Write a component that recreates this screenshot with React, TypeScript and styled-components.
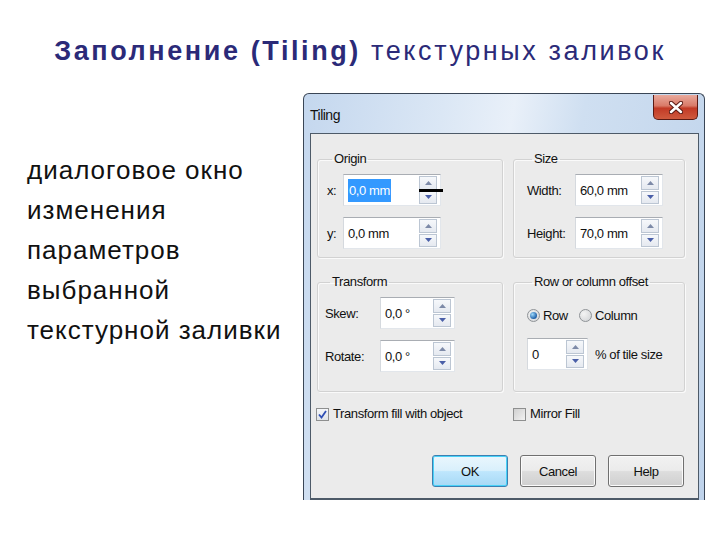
import styled, { createGlobalStyle, css } from "styled-components";

const GlobalStyle = createGlobalStyle`
  html, body {
    margin: 0;
    padding: 0;
    background: #fff;
  }
  body {
    font-family: "Liberation Sans", Arial, sans-serif;
  }
`;

const Slide = styled.div`
  width: 720px;
  height: 540px;
  overflow: hidden;
  background: #fff;
  display: flex;
  flex-direction: column;
`;

const Title = styled.h1`
  margin: 0;
  height: 93px;
  box-sizing: border-box;
  padding-top: 35px;
  text-align: center;
  font-size: 27px;
  line-height: 32px;
  font-weight: normal;
  letter-spacing: 2.6px;
  white-space: nowrap;
  color: #2b2a78;

  b {
    font-weight: bold;
  }
`;

const Body = styled.div`
  display: flex;
  align-items: flex-start;
`;

const Caption = styled.p`
  margin: 0;
  width: 303px;
  box-sizing: border-box;
  padding: 57px 0 0 27px;
  font-size: 26px;
  line-height: 40px;
  letter-spacing: 1px;
  white-space: nowrap;
  color: #111;
`;

/* ---------- dialog window ---------- */

const Window = styled.div`
  width: 402px;
  height: 407px;
  box-sizing: border-box;
  border: 1px solid #3a4656;
  border-bottom: none;
  border-radius: 6px 6px 0 0;
  padding: 0 5px 0 6px;
  display: flex;
  flex-direction: column;
  background: linear-gradient(
    100deg,
    #c4d7ee 0%,
    #dbe7f5 30%,
    #e9f0f9 45%,
    #cfdff1 60%,
    #bfd3eb 100%
  );
  font-family: "Liberation Sans", Arial, sans-serif;
  font-size: 13px;
  letter-spacing: -0.4px;
  color: #111;
`;

const TitleBar = styled.div`
  height: 39px;
  display: flex;
  align-items: flex-start;
  justify-content: space-between;
`;

const WindowTitle = styled.span`
  margin-top: 13px;
  font-size: 14px;
  letter-spacing: -0.5px;
  color: #111;
`;

const CloseButton = styled.div`
  width: 45px;
  height: 25px;
  margin: 1px 1px 0 0;
  box-sizing: border-box;
  border: 1px solid #5a1a14;
  border-top: none;
  border-radius: 0 0 5px 5px;
  background: linear-gradient(
    #e9a99c 0%,
    #d97a68 45%,
    #c23a26 55%,
    #cf5a3e 100%
  );
  display: flex;
  align-items: center;
  justify-content: center;
`;

const Client = styled.div`
  flex: 1;
  border: 1px solid #4d5a68;
  border-bottom-width: 2px;
  background: #ebebeb;
  padding: 18px 12px 0 6px;
  display: flex;
  flex-direction: column;
`;

const Groups = styled.div`
  display: grid;
  grid-template-columns: 186px 172px;
  grid-template-rows: 106px 117px;
  column-gap: 10px;
  row-gap: 17px;
`;

const Group = styled.fieldset<{ $pad: number }>`
  margin: 0;
  min-width: 0;
  border: 1px solid #d2d2d2;
  border-radius: 3px;
  box-shadow: inset 1px 1px 0 #fafafa, 1px 1px 0 #fafafa;
  padding: 8px 6px 8px ${(p) => p.$pad}px;
  display: flex;
  flex-direction: column;
  gap: 11px;
`;

const Legend = styled.legend`
  padding: 0 2px;
  margin-left: 5px;
  line-height: 14px;
`;

const Row = styled.div<{ $gap?: number; $mt?: number }>`
  display: flex;
  align-items: center;
  gap: ${(p) => p.$gap ?? 0}px;
  margin-top: ${(p) => p.$mt ?? 0}px;
`;

const Label = styled.span<{ $w: number }>`
  width: ${(p) => p.$w}px;
  flex: none;
`;

const SpinBox = styled.div<{ $w: number }>`
  position: relative;
  width: ${(p) => p.$w}px;
  height: 32px;
  box-sizing: border-box;
  flex: none;
  display: flex;
  align-items: center;
  background: #fff;
  border: 1px solid #e2e6eb;
  border-top-color: #a9adb3;
  border-left-color: #d5d9de;
`;

const Value = styled.span`
  flex: 1;
  padding-left: 4px;
`;

const Selected = styled.span`
  background: #3399ff;
  color: #fff;
  padding: 4px 1px;
`;

const SpinButtons = styled.div`
  width: 18px;
  height: 28px;
  margin-right: 3px;
  display: flex;
  flex-direction: column;
  gap: 1px;
`;

const SpinButton = styled.div`
  flex: 1;
  box-sizing: border-box;
  border: 1px solid #bcc6d3;
  background: linear-gradient(#f6f8fb, #e5e9f0);
  display: flex;
  align-items: center;
  justify-content: center;
`;

const Mark = styled.div`
  position: absolute;
  right: -3px;
  top: 14px;
  width: 24px;
  height: 3px;
  background: #000;
`;

const Radio = styled.span<{ $on?: boolean }>`
  width: 13px;
  height: 13px;
  flex: none;
  box-sizing: border-box;
  border-radius: 50%;
  border: 1px solid #8f9397;
  background: radial-gradient(circle at 35% 35%, #f4f4f4, #cfd1d4);
  display: flex;
  align-items: center;
  justify-content: center;
  margin-right: 3px;

  ${(p) =>
    p.$on &&
    css`
      &::after {
        content: "";
        width: 7px;
        height: 7px;
        border-radius: 50%;
        background: radial-gradient(circle at 35% 35%, #9fd9fb, #1d5fa8 70%);
      }
    `}
`;

const Checks = styled.div`
  display: grid;
  grid-template-columns: 197px 1fr;
  margin: 15px 0 0 -1px;
`;

const CheckItem = styled.label`
  display: flex;
  align-items: center;
  gap: 4px;
  line-height: 14px;
`;

const Box = styled.span<{ $on?: boolean }>`
  width: 13px;
  height: 13px;
  flex: none;
  box-sizing: border-box;
  border: 1px solid #8e8f8f;
  background: ${(p) =>
    p.$on
      ? "linear-gradient(#f5f7fa, #dfe3e8)"
      : "linear-gradient(135deg, #d0d0d0, #f2f2f2)"};
  display: flex;
  align-items: center;
  justify-content: center;
`;

const Buttons = styled.div`
  display: flex;
  justify-content: flex-end;
  gap: 12px;
  margin-top: 34px;
  padding-right: 2px;
`;

const Button = styled.button<{ $default?: boolean }>`
  width: 76px;
  height: 32px;
  padding: 0;
  border-radius: 3px;
  font-family: inherit;
  font-size: 13px;
  letter-spacing: -0.4px;
  color: #111;
  border: 1px solid #707070;
  background: linear-gradient(#f2f2f2 0%, #ebebeb 48%, #dddddd 52%, #cfcfcf 100%);
  box-shadow: inset 0 0 0 1px #fbfbfb;

  ${(p) =>
    p.$default &&
    css`
      border-color: #3c7fb1;
      box-shadow: inset 0 0 0 1px #48d2f8;
      background: linear-gradient(#eaf6fd 0%, #d9f0fc 48%, #bee6fd 52%, #a7d9f5 100%);
    `}
`;

const Arrow = ({ down }: { down?: boolean }) => (
  <svg width="7" height="4" viewBox="0 0 7 4">
    <path
      d={down ? "M0 0 H7 L3.5 4 Z" : "M0 4 H7 L3.5 0 Z"}
      fill={down ? "#4a5fa8" : "#7d8aa8"}
    />
  </svg>
);

const Spin = ({
  w,
  children,
  mark,
}: {
  w: number;
  children: React.ReactNode;
  mark?: boolean;
}) => (
  <SpinBox $w={w}>
    <Value>{children}</Value>
    <SpinButtons>
      <SpinButton>
        <Arrow />
      </SpinButton>
      <SpinButton>
        <Arrow down />
      </SpinButton>
    </SpinButtons>
    {mark && <Mark />}
  </SpinBox>
);

export default function App() {
  return (
    <Slide>
      <GlobalStyle />
      <Title>
        <b>Заполнение (Tiling)</b> текстурных заливок
      </Title>
      <Body>
        <Caption>
          диалоговое окно
          <br />
          изменения
          <br />
          параметров
          <br />
          выбранной
          <br />
          текстурной заливки
        </Caption>

        <Window>
          <TitleBar>
            <WindowTitle>Tiling</WindowTitle>
            <CloseButton>
              <svg width="14" height="13" viewBox="0 0 14 13">
                <path
                  d="M2 2 L12 11 M12 2 L2 11"
                  stroke="#5a1a14"
                  strokeWidth="4.5"
                  strokeLinecap="round"
                />
                <path
                  d="M2 2 L12 11 M12 2 L2 11"
                  stroke="#fff"
                  strokeWidth="2.5"
                  strokeLinecap="round"
                />
              </svg>
            </CloseButton>
          </TitleBar>

          <Client>
            <Groups>
              <Group $pad={9}>
                <Legend>Origin</Legend>
                <Row>
                  <Label $w={16}>x:</Label>
                  <Spin w={98} mark>
                    <Selected>0,0 mm</Selected>
                  </Spin>
                </Row>
                <Row>
                  <Label $w={16}>y:</Label>
                  <Spin w={98}>0,0 mm</Spin>
                </Row>
              </Group>

              <Group $pad={13}>
                <Legend>Size</Legend>
                <Row>
                  <Label $w={48}>Width:</Label>
                  <Spin w={88}>60,0 mm</Spin>
                </Row>
                <Row>
                  <Label $w={48}>Height:</Label>
                  <Spin w={88}>70,0 mm</Spin>
                </Row>
              </Group>

              <Group $pad={7}>
                <Legend>Transform</Legend>
                <Row>
                  <Label $w={55}>Skew:</Label>
                  <Spin w={75}>0,0 °</Spin>
                </Row>
                <Row>
                  <Label $w={55}>Rotate:</Label>
                  <Spin w={75}>0,0 °</Spin>
                </Row>
              </Group>

              <Group $pad={13}>
                <Legend>Row or column offset</Legend>
                <Row $mt={11}>
                  <Radio $on />
                  <Label $w={36}>Row</Label>
                  <Radio />
                  <span>Column</span>
                </Row>
                <Row $gap={7} $mt={4}>
                  <Spin w={61}>0</Spin>
                  <span>% of tile size</span>
                </Row>
              </Group>
            </Groups>

            <Checks>
              <CheckItem>
                <Box $on>
                  <svg width="9" height="9" viewBox="0 0 9 9">
                    <path
                      d="M1 4.5 L3.5 7.5 L8 1"
                      fill="none"
                      stroke="#2f4fb5"
                      strokeWidth="1.8"
                    />
                  </svg>
                </Box>
                Transform fill with object
              </CheckItem>
              <CheckItem>
                <Box />
                Mirror Fill
              </CheckItem>
            </Checks>

            <Buttons>
              <Button $default>OK</Button>
              <Button>Cancel</Button>
              <Button>Help</Button>
            </Buttons>
          </Client>
        </Window>
      </Body>
    </Slide>
  );
}
